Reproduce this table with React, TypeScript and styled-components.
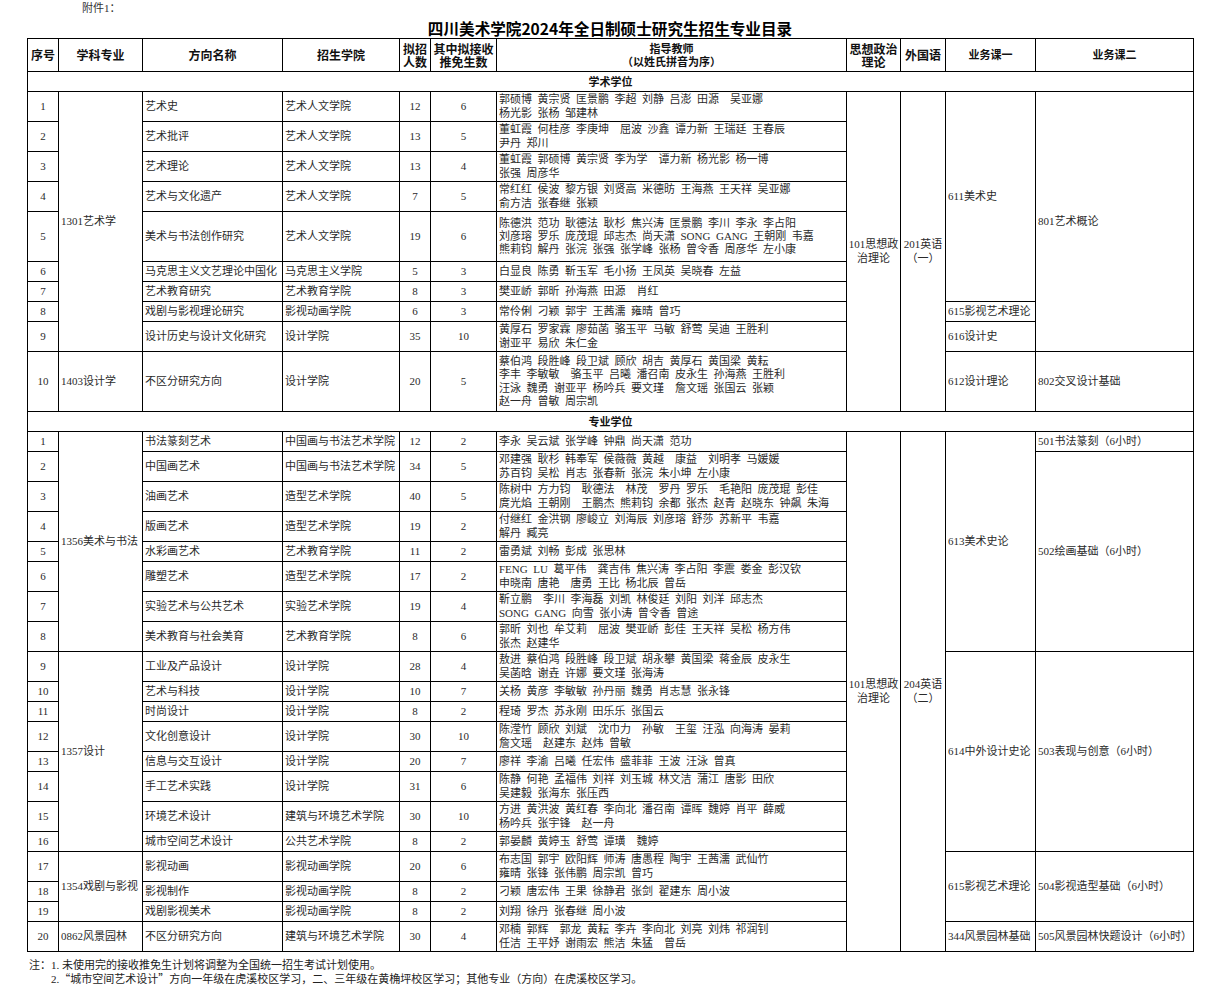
import React from "react";
import styled, { createGlobalStyle } from "styled-components";

const GlobalStyle = createGlobalStyle`
  html, body { margin: 0; padding: 0; background: #fff; }
  body {
    font-family: "Liberation Serif", "Noto Sans CJK SC", serif;
    color: #222;
  }
`;

const Page = styled.div`
  width: 1226px;
  box-sizing: border-box;
  padding: 2px 0 0 27px;
`;

const Sheet = styled.div`
  width: 1166px;
  display: flex;
  flex-direction: column;
`;

const Attachment = styled.div`
  margin-left: 55px;
  font-size: 11px;
  line-height: 13px;
  height: 13px;
  color: #333;
`;

const Title = styled.h1`
  margin: 3px 0 0;
  text-align: center;
  font-family: "Noto Sans CJK SC", sans-serif;
  font-weight: 700;
  font-size: 15.6px;
  line-height: 20px;
  color: #000;
`;

const Table = styled.table`
  border-collapse: collapse;
  table-layout: fixed;
  width: 1166px;
`;

const Col = styled.col<{ $w: number }>`
  width: ${(p) => p.$w}px;
`;

const Tr = styled.tr<{ $h: number }>`
  height: ${(p) => p.$h}px;
`;

const Th = styled.td<{ $size?: number }>`
  border: 1px solid #000;
  padding: 0 1px;
  text-align: center;
  vertical-align: middle;
  font-family: "Noto Sans CJK SC", sans-serif;
  font-weight: 700;
  font-size: ${(p) => p.$size ?? 12}px;
  line-height: 13.3px;
  white-space: pre;
  color: #111;
`;

const SectionCell = styled.td`
  border: 1px solid #000;
  text-align: center;
  vertical-align: middle;
  font-family: "Noto Sans CJK SC", sans-serif;
  font-weight: 700;
  font-size: 11px;
  line-height: 13px;
  color: #111;
`;

const Td = styled.td<{ $align?: "left" | "center" }>`
  border: 1px solid #000;
  padding: 0 ${(p) => (p.$align === "center" ? 1 : 2)}px;
  text-align: ${(p) => p.$align ?? "left"};
  vertical-align: middle;
  font-size: 11px;
  line-height: 13.3px;
  white-space: pre;
  word-spacing: 2.75px;
  overflow: hidden;
  color: #2a2a2a;
`;

const Notes = styled.div`
  margin-top: 7px;
  display: flex;
  flex-direction: column;
  font-size: 11px;
  line-height: 12.7px;
  color: #222;
  padding-left: 2px;
`;

const NoteLine = styled.div<{ $indent?: number }>`
  padding-left: ${(p) => p.$indent ?? 0}px;
  white-space: nowrap;
`;

const Wide = styled.span`
  font-family: "Noto Sans CJK SC", sans-serif;
  font-feature-settings: "fwid";
`;

type Span = { text: string; span: number };
type Row = {
  h: number;
  no: string;
  subject?: Span;
  dir: string;
  school: string;
  quota: string;
  exempt: string;
  teachers: string[];
  politics?: Span;
  lang?: Span;
  c1?: Span;
  c2?: Span;
};

const academic: Row[] = [
  {
    h: 30, no: "1", subject: { text: "1301艺术学", span: 9 }, dir: "艺术史", school: "艺术人文学院", quota: "12", exempt: "6",
    teachers: ["郭硕博 黄宗贤 匡景鹏 李超 刘静 吕澎 田源  吴亚娜", "杨光影 张杨 邹建林"],
    politics: { text: "101思想政\n治理论", span: 10 }, lang: { text: "201英语\n（一）", span: 10 },
    c1: { text: "611美术史", span: 7 }, c2: { text: "801艺术概论", span: 9 },
  },
  { h: 30, no: "2", dir: "艺术批评", school: "艺术人文学院", quota: "13", exempt: "5", teachers: ["董虹霞 何桂彦 李庚坤  屈波 沙鑫 谭力新 王瑞廷 王春辰", "尹丹 郑川"] },
  { h: 30, no: "3", dir: "艺术理论", school: "艺术人文学院", quota: "13", exempt: "4", teachers: ["董虹霞 郭硕博 黄宗贤 李为学  谭力新 杨光影 杨一博", "张强 周彦华"] },
  { h: 30, no: "4", dir: "艺术与文化遗产", school: "艺术人文学院", quota: "7", exempt: "5", teachers: ["常红红 侯波 黎方银 刘贤高 米德昉 王海燕 王天祥 吴亚娜", "俞方洁 张春继 张颖"] },
  {
    h: 50, no: "5", dir: "美术与书法创作研究", school: "艺术人文学院", quota: "19", exempt: "6",
    teachers: [
      "陈德洪 范功 耿德法 耿杉 焦兴涛 匡景鹏 李川 李永 李占阳",
      "刘彦瑢 罗乐 庞茂琨 邱志杰 尚天潇 SONG GANG 王朝刚 韦嘉",
      "熊莉钧 解丹 张浣 张强 张学峰 张杨 曾令香 周彦华 左小康",
    ],
  },
  { h: 20, no: "6", dir: "马克思主义文艺理论中国化", school: "马克思主义学院", quota: "5", exempt: "3", teachers: ["白显良 陈勇 靳玉军 毛小扬 王凤英 吴晓春 左益"] },
  { h: 20, no: "7", dir: "艺术教育研究", school: "艺术教育学院", quota: "8", exempt: "3", teachers: ["樊亚峤 郭昕 孙海燕 田源  肖红"] },
  { h: 20, no: "8", dir: "戏剧与影视理论研究", school: "影视动画学院", quota: "6", exempt: "3", teachers: ["常伶俐 刁颖 郭宇 王茜濡 雍晴 曾巧"], c1: { text: "615影视艺术理论", span: 1 } },
  { h: 30, no: "9", dir: "设计历史与设计文化研究", school: "设计学院", quota: "35", exempt: "10", teachers: ["黄厚石 罗家霖 廖茹菡 骆玉平 马敏 舒莺 吴迪 王胜利", "谢亚平 易欣 朱仁金"], c1: { text: "616设计史", span: 1 } },
  {
    h: 60, no: "10", subject: { text: "1403设计学", span: 1 }, dir: "不区分研究方向", school: "设计学院", quota: "20", exempt: "5",
    teachers: [
      "蔡伯鸿 段胜峰 段卫斌 顾欣 胡吉 黄厚石 黄国梁 黄耘",
      "李丰 李敏敏  骆玉平 吕曦 潘召南 皮永生 孙海燕 王胜利",
      "汪泳 魏勇 谢亚平 杨吟兵 要文瑾  詹文瑶 张国云 张颖",
      "赵一舟 曾敏 周宗凯",
    ],
    c1: { text: "612设计理论", span: 1 }, c2: { text: "802交叉设计基础", span: 1 },
  },
];

const professional: Row[] = [
  {
    h: 20, no: "1", subject: { text: "1356美术与书法", span: 8 }, dir: "书法篆刻艺术", school: "中国画与书法艺术学院", quota: "12", exempt: "2",
    teachers: ["李永 吴云斌 张学峰 钟鼎 尚天潇 范功"],
    politics: { text: "101思想政\n治理论", span: 20 }, lang: { text: "204英语\n（二）", span: 20 },
    c1: { text: "613美术史论", span: 8 }, c2: { text: "501书法篆刻（6小时）", span: 1 },
  },
  {
    h: 30, no: "2", dir: "中国画艺术", school: "中国画与书法艺术学院", quota: "34", exempt: "5",
    teachers: ["邓建强 耿杉 韩奉军 侯薇薇 黄越  康益  刘明孝 马媛媛", "苏百钧 吴松 肖志 张春新 张浣 朱小坤 左小康"],
    c2: { text: "502绘画基础（6小时）", span: 7 },
  },
  { h: 30, no: "3", dir: "油画艺术", school: "造型艺术学院", quota: "40", exempt: "5", teachers: ["陈树中 方力钧  耿德法  林茂  罗丹 罗乐  毛艳阳 庞茂琨 彭佳", "庹光焰 王朝刚  王鹏杰 熊莉钧 余都 张杰 赵青 赵晓东 钟飙 朱海"] },
  { h: 30, no: "4", dir: "版画艺术", school: "造型艺术学院", quota: "19", exempt: "2", teachers: ["付继红 金洪钢 廖峻立 刘海辰 刘彦瑢 舒莎 苏新平 韦嘉", "解丹 臧亮"] },
  { h: 20, no: "5", dir: "水彩画艺术", school: "艺术教育学院", quota: "11", exempt: "2", teachers: ["雷勇斌 刘畅 彭成 张思林"] },
  { h: 30, no: "6", dir: "雕塑艺术", school: "造型艺术学院", quota: "17", exempt: "2", teachers: ["FENG LU 葛平伟  龚吉伟 焦兴涛 李占阳 李震 娄金 彭汉钦", "申晓南 唐艳  唐勇 王比 杨北辰 曾岳"] },
  { h: 30, no: "7", dir: "实验艺术与公共艺术", school: "实验艺术学院", quota: "19", exempt: "4", teachers: ["靳立鹏  李川 李海磊 刘凯 林俊廷 刘阳 刘洋 邱志杰", "SONG GANG 向雪 张小涛 曾令香 曾途"] },
  { h: 30, no: "8", dir: "美术教育与社会美育", school: "艺术教育学院", quota: "8", exempt: "6", teachers: ["郭昕 刘也 牟艾莉  屈波 樊亚峤 彭佳 王天祥 吴松 杨方伟", "张杰 赵建华"] },
  {
    h: 30, no: "9", subject: { text: "1357设计", span: 8 }, dir: "工业及产品设计", school: "设计学院", quota: "28", exempt: "4",
    teachers: ["敖进 蔡伯鸿 段胜峰 段卫斌 胡永攀 黄国梁 蒋金辰 皮永生", "吴菡晗 谢垚 许娜 要文瑾 张海涛"],
    c1: { text: "614中外设计史论", span: 8 }, c2: { text: "503表现与创意（6小时）", span: 8 },
  },
  { h: 20, no: "10", dir: "艺术与科技", school: "设计学院", quota: "10", exempt: "7", teachers: ["关杨 黄彦 李敏敏 孙丹丽 魏勇 肖志慧 张永锋"] },
  { h: 20, no: "11", dir: "时尚设计", school: "设计学院", quota: "8", exempt: "2", teachers: ["程琦 罗杰 苏永刚 田乐乐 张国云"] },
  { h: 30, no: "12", dir: "文化创意设计", school: "设计学院", quota: "30", exempt: "10", teachers: ["陈滢竹 顾欣 刘斌  沈巾力  孙敏  王玺 汪泓 向海涛 晏莉", "詹文瑶  赵建东 赵炜 曾敏"] },
  { h: 20, no: "13", dir: "信息与交互设计", school: "设计学院", quota: "20", exempt: "7", teachers: ["廖祥 李渝 吕曦 任宏伟 盛菲菲 王波 汪泳 曾真"] },
  { h: 30, no: "14", dir: "手工艺术实践", school: "设计学院", quota: "31", exempt: "6", teachers: ["陈静 何艳 孟福伟 刘祥 刘玉城 林文洁 蒲江 唐影 田欣", "吴建毅 张海东 张压西"] },
  { h: 30, no: "15", dir: "环境艺术设计", school: "建筑与环境艺术学院", quota: "30", exempt: "10", teachers: ["方进 黄洪波 黄红春 李向北 潘召南 谭晖 魏婷 肖平 薛威", "杨吟兵 张宇锋  赵一舟"] },
  { h: 20, no: "16", dir: "城市空间艺术设计", school: "公共艺术学院", quota: "8", exempt: "2", teachers: ["郭晏麟 黄婷玉 舒莺 谭璜  魏婷"] },
  {
    h: 30, no: "17", subject: { text: "1354戏剧与影视", span: 3 }, dir: "影视动画", school: "影视动画学院", quota: "20", exempt: "6",
    teachers: ["布志国 郭宇 欧阳辉 师涛 唐愚程 陶宇 王茜濡 武仙竹", "雍晴 张锋 张伟鹏 周宗凯 曾巧"],
    c1: { text: "615影视艺术理论", span: 3 }, c2: { text: "504影视造型基础（6小时）", span: 3 },
  },
  { h: 20, no: "18", dir: "影视制作", school: "影视动画学院", quota: "8", exempt: "2", teachers: ["刁颖 唐宏伟 王果 徐静君 张剑 翟建东 周小波"] },
  { h: 20, no: "19", dir: "戏剧影视美术", school: "影视动画学院", quota: "8", exempt: "2", teachers: ["刘翔 徐丹 张春继 周小波"] },
  {
    h: 30, no: "20", subject: { text: "0862风景园林", span: 1 }, dir: "不区分研究方向", school: "建筑与环境艺术学院", quota: "30", exempt: "4",
    teachers: ["邓楠 郭辉  郭龙 黄耘 李卉 李向北 刘亮 刘炜 祁润钊", "任洁 王平妤 谢雨宏 熊洁 朱猛  曾岳"],
    c1: { text: "344风景园林基础", span: 1 }, c2: { text: "505风景园林快题设计（6小时）", span: 1 },
  },
];

const colWidths = [31, 84, 140, 117, 31, 66, 350, 54, 45, 90, 158];

function DataRow({ r }: { r: Row }) {
  return (
    <Tr $h={r.h}>
      <Td $align="center">{r.no}</Td>
      {r.subject && <Td rowSpan={r.subject.span}>{r.subject.text}</Td>}
      <Td>{r.dir}</Td>
      <Td>{r.school}</Td>
      <Td $align="center">{r.quota}</Td>
      <Td $align="center">{r.exempt}</Td>
      <Td>{r.teachers.join("\n")}</Td>
      {r.politics && <Td $align="center" rowSpan={r.politics.span}>{r.politics.text}</Td>}
      {r.lang && <Td $align="center" rowSpan={r.lang.span}>{r.lang.text}</Td>}
      {r.c1 && <Td rowSpan={r.c1.span}>{r.c1.text}</Td>}
      {r.c2 && <Td rowSpan={r.c2.span}>{r.c2.text}</Td>}
    </Tr>
  );
}

export default function App() {
  return (
    <>
      <GlobalStyle />
      <Page>
        <Sheet>
          <Attachment>附件1：</Attachment>
          <Title>四川美术学院2024年全日制硕士研究生招生专业目录</Title>
          <Table>
            <colgroup>
              {colWidths.map((w, i) => (
                <Col key={i} $w={w} />
              ))}
            </colgroup>
            <tbody>
              <Tr $h={33}>
                <Th>序号</Th>
                <Th>学科专业</Th>
                <Th>方向名称</Th>
                <Th>招生学院</Th>
                <Th>{"拟招\n人数"}</Th>
                <Th>{"其中拟接收\n推免生数"}</Th>
                <Th $size={11}>{"指导教师\n（以姓氏拼音为序）"}</Th>
                <Th>{"思想政治\n理论"}</Th>
                <Th>外国语</Th>
                <Th $size={11}>业务课一</Th>
                <Th $size={11}>业务课二</Th>
              </Tr>
              <Tr $h={20}>
                <SectionCell colSpan={11}>学术学位</SectionCell>
              </Tr>
              {academic.map((r) => (
                <DataRow key={"a" + r.no} r={r} />
              ))}
              <Tr $h={20}>
                <SectionCell colSpan={11}>专业学位</SectionCell>
              </Tr>
              {professional.map((r) => (
                <DataRow key={"p" + r.no} r={r} />
              ))}
            </tbody>
          </Table>
          <Notes>
            <NoteLine>注：1. 未使用完的接收推免生计划将调整为全国统一招生考试计划使用。</NoteLine>
            <NoteLine $indent={22}>
              2.<Wide>“</Wide>城市空间艺术设计<Wide>”</Wide>方向一年级在虎溪校区学习，二、三年级在黄桷坪校区学习；其他专业（方向）在虎溪校区学习。
            </NoteLine>
          </Notes>
        </Sheet>
      </Page>
    </>
  );
}
